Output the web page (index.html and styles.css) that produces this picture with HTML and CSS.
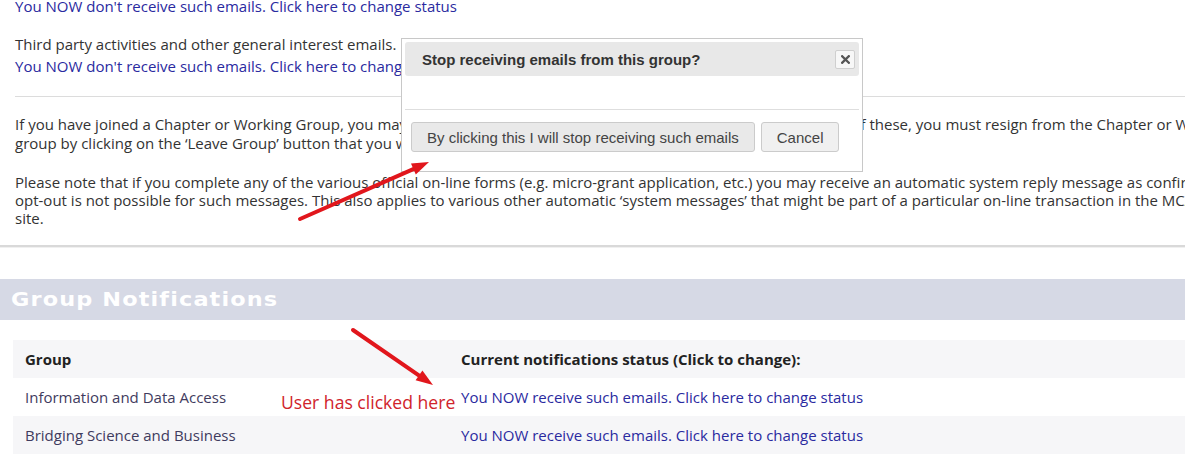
FILE: index.html
```html
<!DOCTYPE html>
<html lang="en">
<head>
<meta charset="utf-8">
<title>Email notifications</title>
<link rel="stylesheet" href="styles.css">
</head>
<body>
<div class="page">
  <section class="notice">
    <div class="status-line first"><a class="status-link" href="#">You NOW don't receive such emails. Click here to change status</a></div>
    <div class="item">
      <div class="item-title">Third party activities and other general interest emails.</div>
      <div class="status-line"><a class="status-link" href="#">You NOW don't receive such emails. Click here to change status</a></div>
    </div>
    <div class="rule"></div>
    <p class="para para-a">If you have joined a Chapter or Working Group, you may also receive updates from the group itself. To stop receiving all of these, you must resign from the Chapter or Working Group,<br>group by clicking on the ‘Leave Group’ button that you will find on the group page.</p>
    <p class="para para-b">Please note that if you complete any of the various official on-line forms (e.g. micro-grant application, etc.) you may receive an automatic system reply message as confirmation of your submission.<br>opt-out is not possible for such messages. This also applies to various other automatic ‘system messages’ that might be part of a particular on-line transaction in the MCAA web<br>site.</p>
  </section>
  <div class="thick-rule"></div>

  <h2 class="band"><span class="band-text">Group Notifications</span></h2>

  <table class="groups">
    <thead>
      <tr><th class="col-group">Group</th><th>Current notifications status (Click to change):</th></tr>
    </thead>
    <tbody>
      <tr><td class="group-name">Information and Data Access</td><td><a class="status-link" href="#">You NOW receive such emails. Click here to change status</a></td></tr>
      <tr class="alt"><td class="group-name">Bridging Science and Business</td><td><a class="status-link" href="#">You NOW receive such emails. Click here to change status</a></td></tr>
    </tbody>
  </table>
</div>

<div class="dialog">
  <div class="dialog-head">
    <span class="dialog-title">Stop receiving emails from this group?</span>
    <button class="dialog-close" type="button" aria-label="close">
      <svg width="9" height="9" viewBox="0 0 9 9"><path d="M1.2 1.2 L7.8 7.8 M7.8 1.2 L1.2 7.8" stroke="#555" stroke-width="2.3" stroke-linecap="square"/></svg>
    </button>
  </div>
  <div class="dialog-body"></div>
  <div class="dialog-foot">
    <button class="btn" type="button">By clicking this I will stop receiving such emails</button>
    <button class="btn btn-cancel" type="button">Cancel</button>
  </div>
</div>

<svg class="arrows" width="1185" height="464" viewBox="0 0 1185 464">
  <line x1="300" y1="219" x2="415" y2="168.3" stroke="#e1161c" stroke-width="4" stroke-linecap="round"/>
  <polygon points="429,162 415.8,174.4 411,163.4" fill="#e1161c"/>
  <line x1="353" y1="330" x2="421" y2="376.8" stroke="#e1161c" stroke-width="4" stroke-linecap="round"/>
  <polygon points="433,385 415.6,380.3 422.4,370.5" fill="#e1161c"/>
</svg>
<div class="annotation">User has clicked here</div>
</body>
</html>
```
FILE: styles.css
```css
html, body {
  margin: 0;
  padding: 0;
  overflow: hidden;
  background: #fff;
}
body {
  font-family: "Open Sans", "Liberation Sans", sans-serif;
  font-size: 15px;
  color: #333;
  width: 1185px;
  height: 464px;
  position: relative;
}
.page {
  width: 1400px;
}
.notice {
  padding-left: 15px;
}
.status-line {
  line-height: 19px;
  white-space: nowrap;
}
.status-line.first {
  margin-top: -3px;
}
.status-link {
  color: #2a2aa0;
  text-decoration: none;
}
.item {
  margin-top: 19px;
}
.item-title {
  line-height: 19px;
}
.item .status-line {
  margin-top: 3px;
}
.rule {
  margin-top: 20px;
  border-top: 1px solid #dcdcdc;
}
.para {
  margin: 0;
  white-space: nowrap;
}
.para-a {
  margin-top: 18px;
  line-height: 19px;
}
.para-b {
  margin-top: 20px;
  line-height: 18px;
}
.thick-rule {
  margin-top: 18px;
  height: 2px;
  background: #d9d9d9;
  border-bottom: 1px solid #f0f0f0;
}
.band {
  margin: 31px 0 0 0;
  height: 41px;
  line-height: 41px;
  background: #d6d9e5;
  color: #fff;
  font-family: "DejaVu Sans", sans-serif;
  font-weight: bold;
  font-size: 20px;
  letter-spacing: 1px;
  padding-left: 11px;
}
.band-text {
  display: inline-block;
  transform: scaleX(1.12);
  transform-origin: left center;
}
.groups {
  margin: 20px 0 0 13px;
  border-collapse: collapse;
  width: 1300px;
}
.groups th, .groups td {
  height: 38px;
  padding: 0 12px;
  text-align: left;
  vertical-align: middle;
  white-space: nowrap;
}
.groups thead tr {
  background: #f6f6f8;
}
.groups th {
  font-weight: bold;
  color: #222;
}
.col-group {
  width: 412px;
}
.groups tr.alt {
  background: #f6f6f8;
}
.group-name {
  color: #3f3b5e;
}

/* dialog overlay */
.dialog {
  position: absolute;
  left: 401px;
  top: 38px;
  width: 454px;
  height: 126px;
  padding: 3px;
  border: 1px solid #c8c8c8;
  background: #fff;
  font-family: "Liberation Sans", Arial, sans-serif;
}
.dialog-head {
  height: 34px;
  background: #e8e8e8;
  border-radius: 3px;
  display: flex;
  align-items: center;
  justify-content: space-between;
  padding: 0 4px 0 17px;
}
.dialog-title {
  font-weight: bold;
  font-size: 15px;
  color: #333;
}
.dialog-close {
  width: 20px;
  height: 19px;
  padding: 0;
  border: 1px solid #cfcfcf;
  border-radius: 2px;
  background: #f7f7f7;
  display: flex;
  align-items: center;
  justify-content: center;
}
.dialog-body {
  height: 33px;
}
.dialog-foot {
  border-top: 1px solid #dedede;
  padding: 12px 0 0 6px;
  display: flex;
  gap: 6px;
}
.btn {
  height: 30px;
  padding: 0 15px;
  border: 1px solid #cbcbcb;
  border-radius: 3px;
  background: #e9e9e9;
  color: #444;
  font-family: "Liberation Sans", Arial, sans-serif;
  font-size: 15px;
}
.btn-cancel {
  background: #f0f0f0;
}

.arrows {
  position: absolute;
  left: 0;
  top: 0;
  pointer-events: none;
}
.annotation {
  position: absolute;
  left: 281px;
  top: 390px;
  font-family: "Open Sans", sans-serif;
  font-size: 17.6px;
  line-height: 24px;
  color: #d0232b;
  white-space: nowrap;
}
```
